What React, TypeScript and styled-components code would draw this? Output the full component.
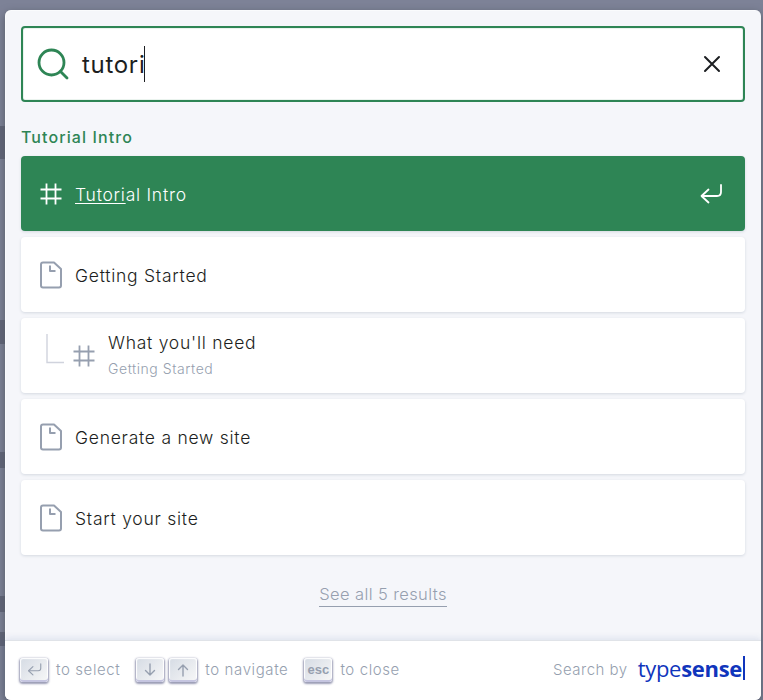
import React from "react";
import styled, { createGlobalStyle } from "styled-components";

const GlobalStyle = createGlobalStyle`
  html, body {
    margin: 0;
    padding: 0;
    height: 100%;
    overflow: hidden;
  }
  body {
    font-family: Inter, "Noto Sans", sans-serif;
    font-weight: 300;
    color: #1c1e21;
  }
`;

const PRIMARY = "#2e8555";

const Backdrop = styled.div`
  width: 763px;
  height: 700px;
  box-sizing: border-box;
  padding: 10px 2px 0 5px;
  background: #7d8297;
  position: relative;
  overflow: hidden;
`;

const PageBand = styled.div<{ $top: number; $height: number }>`
  position: absolute;
  left: 0;
  width: 5px;
  top: ${(p) => p.$top}px;
  height: ${(p) => p.$height}px;
  background: #5f6477;
`;

const Modal = styled.div`
  position: relative;
  height: 690px;
  display: flex;
  flex-direction: column;
  background: #f5f6fa;
  border-radius: 6px;
  box-shadow: inset 1px 1px 0 0 rgba(255, 255, 255, 0.5), 0 3px 8px 0 #555a64;
`;

const SearchBar = styled.header`
  padding: 16px 16px 0 16px;
`;

const SearchForm = styled.form`
  display: flex;
  align-items: center;
  height: 76px;
  box-sizing: border-box;
  border: 2px solid ${PRIMARY};
  border-radius: 4px;
  background: #fff;
  box-shadow: inset 0 0 0 1px rgba(46, 133, 85, 0.1);
  padding: 0 22px 0 14px;
`;

const SearchIconBox = styled.span`
  display: flex;
  color: ${PRIMARY};
  margin-right: 13px;
`;

const SearchValue = styled.div`
  flex: 1;
  display: flex;
  align-items: center;
  color: #1c1e21;
`;

const TypedText = styled.span`
  margin-top: 2px;
  font-size: 24px;
  font-weight: 400;
  line-height: 36px;
  letter-spacing: 0.7px;
`;

const Caret = styled.span`
  width: 1px;
  height: 36px;
  margin-left: -1px;
  background: #1c1e21;
`;

const ResetButton = styled.button`
  display: flex;
  padding: 0;
  border: 0;
  background: none;
  color: #1c1e21;
`;

const Dropdown = styled.div`
  flex: 1;
  padding: 0 16px;
  display: flex;
  flex-direction: column;
`;

const SourceTitle = styled.div`
  margin-top: 24px;
  height: 30px;
  line-height: 22px;
  font-size: 16px;
  font-weight: 500;
  color: ${PRIMARY};
  letter-spacing: 1.1px;
`;

const HitList = styled.ul`
  list-style: none;
  margin: 0;
  padding: 0;
  display: flex;
  flex-direction: column;
  gap: 6px;
`;

const Hit = styled.li<{ $selected?: boolean }>`
  height: 75px;
  box-sizing: border-box;
  display: flex;
  align-items: center;
  padding-left: 18px;
  padding-right: 22px;
  border-radius: 4px;
  background: ${(p) => (p.$selected ? PRIMARY : "#fff")};
  box-shadow: 0 1px 3px 0 #d4d9e1;
  color: ${(p) => (p.$selected ? "#fff" : "#1c1e21")};
`;

const HitIcon = styled.span<{ $selected?: boolean }>`
  display: flex;
  width: 24px;
  color: ${(p) => (p.$selected ? "#fff" : "#969faf")};
  margin-right: 12px;
`;

const TreeIcon = styled.span`
  display: flex;
  color: #d0d3dd;
  width: 24px;
  margin-left: 6px;
  margin-right: 3px;
  margin-top: -14px;
`;

const HitBody = styled.div`
  flex: 1;
  margin-top: 2px;
  display: flex;
  flex-direction: column;
`;

const HitTitle = styled.span`
  font-size: 17.5px;
  line-height: 24px;
  letter-spacing: 0.75px;
`;

const HitPath = styled.span`
  margin: 4px 0 3px;
  font-size: 14px;
  line-height: 20px;
  letter-spacing: 0.55px;
  color: #969faf;
`;

const Match = styled.mark`
  background: none;
  color: inherit;
  text-decoration: underline;
  text-underline-offset: 2px;
  text-decoration-thickness: 1px;
`;

const SeeAllRow = styled.div`
  display: flex;
  justify-content: center;
  margin-top: 27px;
`;

const SeeAll = styled.a`
  font-size: 16.5px;
  line-height: 24px;
  letter-spacing: 0.4px;
  color: #969faf;
  border-bottom: 1px solid #969faf;
`;

const Footer = styled.footer`
  height: 59px;
  flex: none;
  display: flex;
  align-items: center;
  justify-content: space-between;
  padding: 0 16px 2px 15px;
  box-sizing: border-box;
  background: #fff;
  border-radius: 0 0 6px 6px;
  box-shadow: 0 -1px 0 0 #e0e3e8, 0 -3px 6px 0 rgba(69, 98, 155, 0.12);
`;

const Commands = styled.ul`
  list-style: none;
  margin: 0;
  padding: 0;
  display: flex;
  gap: 16px;
`;

const Command = styled.li`
  display: flex;
  align-items: center;
`;

const Key = styled.kbd`
  width: 28px;
  height: 24px;
  margin-right: 8px;
  display: flex;
  align-items: center;
  justify-content: center;
  border-radius: 3px;
  background: linear-gradient(-225deg, #d5dbe4, #f8f8f8);
  box-shadow: inset 0 -2px 0 0 #c5c5e0, inset 0 0 1px 1px #fff, 0 1px 2px 1px rgba(30, 35, 90, 0.45);
  color: #969faf;
  font-family: "Liberation Sans", sans-serif;
  font-size: 13px;
  font-weight: 700;
  & + & {
    margin-left: -3px;
  }
`;

const CommandLabel = styled.span`
  font-size: 15px;
  letter-spacing: 0.6px;
  color: #969faf;
`;

const Logo = styled.a`
  display: flex;
  align-items: center;
`;

const SearchByLabel = styled.span`
  font-size: 15px;
  letter-spacing: 0.5px;
  color: #969faf;
  margin-right: 10px;
`;

const Brand = styled.span`
  margin-bottom: 3px;
  font-family: "Open Sans", sans-serif;
  font-size: 22px;
  font-weight: 400;
  line-height: 24px;
  color: #1035bc;
  letter-spacing: -0.3px;
  border-right: 2px solid #1035bc;
  padding-right: 1px;
`;

const BrandBold = styled.b`
  font-weight: 700;
`;

function SearchGlyph() {
  return (
    <svg width="32" height="32" viewBox="0 0 32 32" fill="none" stroke="currentColor" strokeWidth="2.8" strokeLinecap="round">
      <circle cx="14.5" cy="14.5" r="12.5" />
      <path d="M23.5 23.5 L30 30" />
    </svg>
  );
}

function CloseGlyph() {
  return (
    <svg width="18" height="18" viewBox="0 0 18 18" fill="none" stroke="currentColor" strokeWidth="2" strokeLinecap="round">
      <path d="M2 2 L16 16 M16 2 L2 16" />
    </svg>
  );
}

function HashGlyph() {
  return (
    <svg width="24" height="24" viewBox="0 0 24 24" fill="none" stroke="currentColor" strokeWidth="1.8">
      <path d="M7.5 1.5 V22.5 M16.5 1.5 V22.5 M1.5 7.5 H22.5 M1.5 16.5 H22.5" />
    </svg>
  );
}

function DocGlyph() {
  return (
    <svg width="24" height="28" viewBox="0 0 24 28" fill="none" stroke="currentColor" strokeWidth="2" strokeLinejoin="round">
      <path d="M4 1.5 H15 L22 8 V24.5 Q22 26.5 20 26.5 H4 Q2 26.5 2 24.5 V3.5 Q2 1.5 4 1.5 Z" />
      <path d="M11 4.5 V10 H16.5" />
    </svg>
  );
}

function TreeGlyph() {
  return (
    <svg width="20" height="32" viewBox="0 0 20 32" fill="none" stroke="currentColor" strokeWidth="1.4">
      <path d="M2 1 V29.5 H19" />
    </svg>
  );
}

function EnterGlyph({ size = 24 }: { size?: number }) {
  return (
    <svg width={size} height={size} viewBox="0 0 24 24" fill="none" stroke="currentColor" strokeWidth="1.8" strokeLinecap="round" strokeLinejoin="round">
      <path d="M22 3 V10 Q22 14 18 14 H3" />
      <path d="M9.5 7.5 L2.5 14 L9.5 20.5" />
    </svg>
  );
}

function ArrowGlyph({ up }: { up?: boolean }) {
  return (
    <svg width="14" height="14" viewBox="0 0 14 14" fill="none" stroke="currentColor" strokeWidth="1.4" strokeLinecap="round" strokeLinejoin="round">
      {up ? <path d="M7 13 V2 M2.5 6.5 L7 2 L11.5 6.5" /> : <path d="M7 1 V12 M2.5 7.5 L7 12 L11.5 7.5" />}
    </svg>
  );
}

export default function App() {
  return (
    <>
      <GlobalStyle />
      <Backdrop>
        <PageBand $top={126} $height={33} />
        <PageBand $top={320} $height={24} />
        <PageBand $top={452} $height={16} />
        <PageBand $top={596} $height={16} />
        <PageBand $top={632} $height={14} />
        <Modal>
          <SearchBar>
            <SearchForm>
              <SearchIconBox>
                <SearchGlyph />
              </SearchIconBox>
              <SearchValue>
                <TypedText>tutori</TypedText>
                <Caret />
              </SearchValue>
              <ResetButton type="button" aria-label="Clear">
                <CloseGlyph />
              </ResetButton>
            </SearchForm>
          </SearchBar>
          <Dropdown>
            <SourceTitle>Tutorial Intro</SourceTitle>
            <HitList>
              <Hit $selected>
                <HitIcon $selected>
                  <HashGlyph />
                </HitIcon>
                <HitBody>
                  <HitTitle>
                    <Match>Tutori</Match>al Intro
                  </HitTitle>
                </HitBody>
                <EnterGlyph />
              </Hit>
              <Hit>
                <HitIcon>
                  <DocGlyph />
                </HitIcon>
                <HitBody>
                  <HitTitle>Getting Started</HitTitle>
                </HitBody>
              </Hit>
              <Hit>
                <TreeIcon>
                  <TreeGlyph />
                </TreeIcon>
                <HitIcon>
                  <HashGlyph />
                </HitIcon>
                <HitBody>
                  <HitTitle>What you'll need</HitTitle>
                  <HitPath>Getting Started</HitPath>
                </HitBody>
              </Hit>
              <Hit>
                <HitIcon>
                  <DocGlyph />
                </HitIcon>
                <HitBody>
                  <HitTitle>Generate a new site</HitTitle>
                </HitBody>
              </Hit>
              <Hit>
                <HitIcon>
                  <DocGlyph />
                </HitIcon>
                <HitBody>
                  <HitTitle>Start your site</HitTitle>
                </HitBody>
              </Hit>
            </HitList>
            <SeeAllRow>
              <SeeAll>See all 5 results</SeeAll>
            </SeeAllRow>
          </Dropdown>
          <Footer>
            <Commands>
              <Command>
                <Key>
                  <EnterGlyph size={15} />
                </Key>
                <CommandLabel>to select</CommandLabel>
              </Command>
              <Command>
                <Key>
                  <ArrowGlyph />
                </Key>
                <Key>
                  <ArrowGlyph up />
                </Key>
                <CommandLabel>to navigate</CommandLabel>
              </Command>
              <Command>
                <Key>esc</Key>
                <CommandLabel>to close</CommandLabel>
              </Command>
            </Commands>
            <Logo>
              <SearchByLabel>Search by</SearchByLabel>
              <Brand>
                type<BrandBold>sense</BrandBold>
              </Brand>
            </Logo>
          </Footer>
        </Modal>
      </Backdrop>
    </>
  );
}
